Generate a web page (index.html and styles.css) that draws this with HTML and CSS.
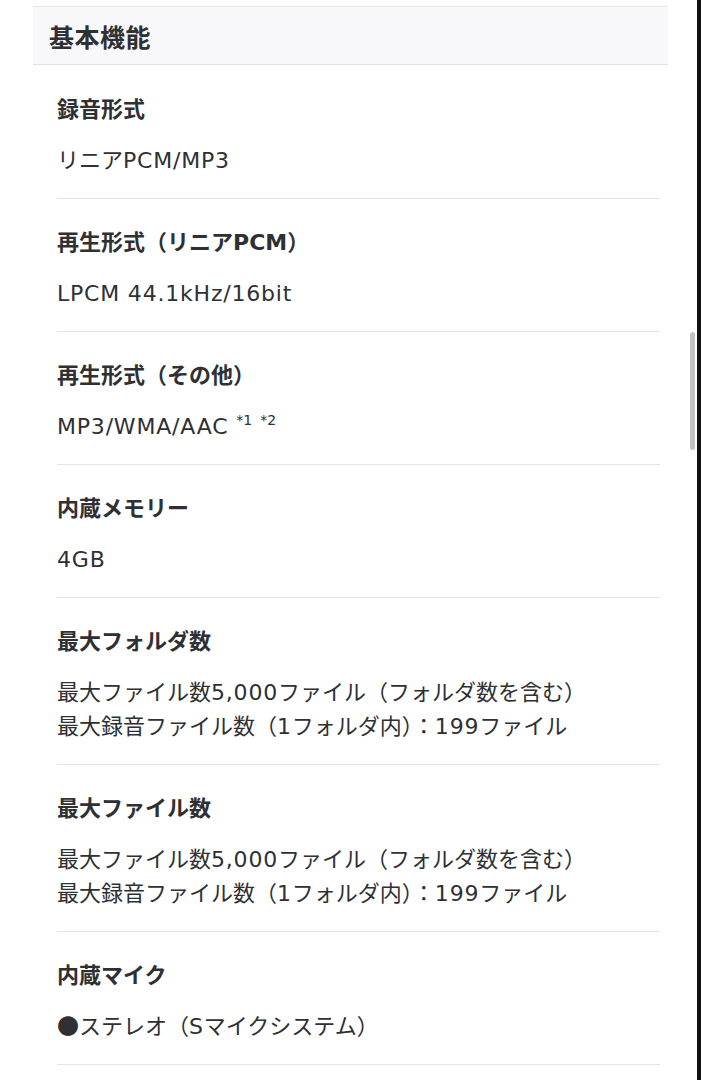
FILE: index.html
```html
<!DOCTYPE html>
<html lang="ja">
<head>
<meta charset="utf-8">
<title>基本機能</title>
<link rel="stylesheet" href="styles.css">
</head>
<body>
<div class="screen">
  <div class="page">
    <section class="spec">
      <h2 class="spec-head">基本機能</h2>
      <dl class="spec-list">
        <div class="spec-row">
          <dt class="spec-label">録音形式</dt>
          <dd class="spec-value">リニア<span class="lat">PCM/MP3</span></dd>
        </div>
        <div class="spec-row">
          <dt class="spec-label">再生形式（リニア<span class="lat">PCM</span>）</dt>
          <dd class="spec-value"><span class="lat">LPCM 44.1kHz/16bit</span></dd>
        </div>
        <div class="spec-row">
          <dt class="spec-label">再生形式（その他）</dt>
          <dd class="spec-value"><span class="lat">MP3/WMA/AAC</span><sup class="note">*1</sup><sup class="note">*2</sup></dd>
        </div>
        <div class="spec-row">
          <dt class="spec-label">内蔵メモリー</dt>
          <dd class="spec-value"><span class="lat">4GB</span></dd>
        </div>
        <div class="spec-row">
          <dt class="spec-label">最大フォルダ数</dt>
          <dd class="spec-value">最大ファイル数<span class="lat">5,000</span>ファイル（フォルダ数を含む）<br>最大録音ファイル数（<span class="lat">1</span>フォルダ内）：<span class="lat">199</span>ファイル</dd>
        </div>
        <div class="spec-row">
          <dt class="spec-label">最大ファイル数</dt>
          <dd class="spec-value">最大ファイル数<span class="lat">5,000</span>ファイル（フォルダ数を含む）<br>最大録音ファイル数（<span class="lat">1</span>フォルダ内）：<span class="lat">199</span>ファイル</dd>
        </div>
        <div class="spec-row">
          <dt class="spec-label">内蔵マイク</dt>
          <dd class="spec-value">●ステレオ（<span class="lat">S</span>マイクシステム）</dd>
        </div>
      </dl>
    </section>
  </div>
  <div class="scrollbar"></div>
  <div class="edge"></div>
</div>
</body>
</html>
```

FILE: styles.css
```css
html, body {
  margin: 0;
  padding: 0;
  background: #ffffff;
}

body {
  font-family: "Noto Sans CJK JP", "Noto Sans", sans-serif;
  color: #2e3033;
}

.screen {
  position: relative;
  width: 701px;
  height: 1080px;
  overflow: hidden;
}

.page {
  padding: 6px 0 0 33px;
  width: 635px;
}

.spec-head {
  margin: 0;
  height: 57px;
  box-sizing: content-box;
  display: flex;
  align-items: center;
  padding: 0 0 0 16px;
  background: #f8f8fa;
  border-top: 1px solid #e8e8ea;
  border-bottom: 1px solid #e2e2e4;
  font-size: 25px;
  font-weight: 700;
  line-height: 30px;
  letter-spacing: 0.5px;
  color: #2e3033;
}

.spec-list {
  margin: 0;
  padding: 1px 8px 0 24px;
}

.spec-row {
  padding: 26px 0 23px;
  border-bottom: 1px solid #e4e4e6;
}

.spec-label {
  margin: 0;
  font-size: 22px;
  font-weight: 700;
  line-height: 30px;
}

.spec-value {
  margin: 19px 0 0;
  font-size: 22px;
  font-weight: 400;
  line-height: 34px;
}

.lat {
  font-family: "DejaVu Sans", "Noto Sans CJK JP", sans-serif;
  letter-spacing: 0.8px;
  line-height: 1;
}

.spec-label .lat {
  letter-spacing: 0;
}

.note {
  font-family: "DejaVu Sans", sans-serif;
  font-size: 14px;
  line-height: 0;
  vertical-align: 9px;
  margin-left: 8px;
}

.scrollbar {
  position: absolute;
  left: 690px;
  top: 332px;
  width: 5px;
  height: 118px;
  border-radius: 3px;
  background: #c2c2c2;
}

.edge {
  position: absolute;
  right: 0;
  top: 0;
  width: 4px;
  height: 1080px;
  background: #111111;
}
```
